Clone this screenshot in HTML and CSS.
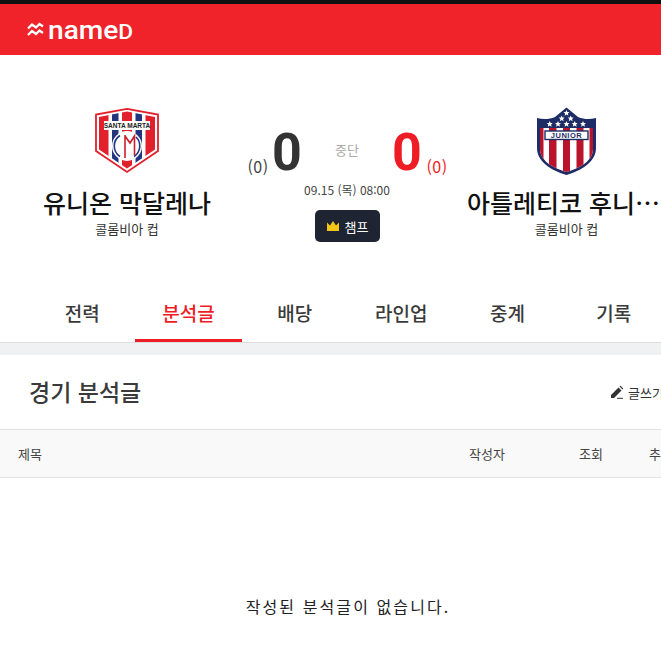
FILE: index.html
```html
<!DOCTYPE html>
<html lang="ko">
<head>
<meta charset="utf-8">
<title>NAMED</title>
<link rel="stylesheet" href="styles.css">
</head>
<body>
<div class="page">
  <header class="topbar">
    <svg class="logo-mark" viewBox="0 0 17 15" width="17" height="15" aria-hidden="true">
      <path d="M1 6.500 L5 2.500 L9 5.500 L12.500 2 L16 4.500 M1 13 L5 9 L9 12 L12.500 8.500 L16 11" fill="none" stroke="#fff" stroke-width="2.300"/>
    </svg>
    <span class="logo-text">name<span class="logo-d">D</span></span>
  </header>

  <section class="match">
    <div class="team">
      <svg class="crest" viewBox="0 0 64 66" width="64" height="66" aria-hidden="true">
        <defs>
          <clipPath id="santa-inner"><path d="M32 3.500 L60 9 V41.500 L32 60.500 L4 41.500 V9 Z"/></clipPath>
        </defs>
        <path d="M32 0.800 L63 6.500 V43 L32 64 L1 43 V6.500 Z" fill="#fff" stroke="#e2202c" stroke-width="1.800"/>
        <g clip-path="url(#santa-inner)">
          <rect x="4" y="0" width="9.500" height="66" fill="#e2202c"/>
          <rect x="17" y="0" width="6.500" height="66" fill="#23357f"/>
          <rect x="27" y="0" width="10" height="66" fill="#e2202c"/>
          <rect x="40.500" y="0" width="6.500" height="66" fill="#23357f"/>
          <rect x="50.500" y="0" width="9.500" height="66" fill="#e2202c"/>
        </g>
        <rect x="9" y="13" width="46" height="9" fill="#fff"/>
        <text class="crest-santa" x="32" y="20.200" text-anchor="middle">SANTA MARTA</text>
        <circle cx="32" cy="38" r="15" fill="#fff"/>
        <path d="M25 27.500 A12.500 12.500 0 0 0 25 48.500 M41 29 A12.500 12.500 0 0 1 39 48.500" fill="none" stroke="#23357f" stroke-width="1.600"/>
        <path d="M30 27 V50 M30 28 L35 35 L39.500 28 V47" fill="none" stroke="#c9202c" stroke-width="1.600"/>
      </svg>
      <h2 class="team-name">유니온 막달레나</h2>
      <p class="team-league">콜롬비아 컵</p>
    </div>

    <div class="center">
      <div class="score-row">
        <span class="sub-score">(0)</span>
        <strong class="score">0</strong>
        <span class="status">중단</span>
        <strong class="score score-away">0</strong>
        <span class="sub-score sub-away">(0)</span>
      </div>
      <p class="date">09.15 (목) 08:00</p>
      <a class="champ">
        <svg viewBox="0 0 14 12" width="14" height="12" aria-hidden="true">
          <path d="M1 2.500 L4 5.500 L7 1 L10 5.500 L13 2.500 V11 H1 Z" fill="#f5c518"/>
        </svg>
        <span>챔프</span>
      </a>
    </div>

    <div class="team team-right">
      <svg class="crest" viewBox="0 0 60 68" width="60" height="68" aria-hidden="true">
        <defs>
          <path id="star" d="M0 -3 L0.900 -1 L3 -0.900 L1.400 0.500 L1.900 2.700 L0 1.500 L-1.900 2.700 L-1.400 0.500 L-3 -0.900 L-0.900 -1 Z"/>
          <clipPath id="junior-inner"><path d="M3 21 H56 V42 C56 53 44 61 29.500 65 C15 61 3 53 3 42 Z"/></clipPath>
        </defs>
        <path d="M29.500 0.500 L41 10 C47 12.500 53 12.500 59 11 V41 C59 54 46 63 29.500 68 C13 63 0 54 0 41 V11 C6 12.500 12 12.500 18 10 Z" fill="#1e2c66"/>
        <g clip-path="url(#junior-inner)">
          <rect x="3" y="21" width="53" height="46" fill="#fff"/>
          <rect x="3" y="21" width="3.500" height="46" fill="#b9142b"/>
          <rect x="12" y="21" width="7.500" height="46" fill="#b9142b"/>
          <rect x="26" y="21" width="7" height="46" fill="#b9142b"/>
          <rect x="39.500" y="21" width="7" height="46" fill="#b9142b"/>
          <rect x="52.500" y="21" width="3.500" height="46" fill="#b9142b"/>
        </g>
        <g fill="#fff">
          <use href="#star" x="29.500" y="6"/><use href="#star" x="24.700" y="11.500"/><use href="#star" x="33.700" y="11.500"/>
          <use href="#star" x="12.700" y="17"/><use href="#star" x="21" y="17"/><use href="#star" x="29.500" y="17"/><use href="#star" x="37.700" y="17"/><use href="#star" x="46" y="17"/>
        </g>
        <rect x="8" y="24" width="43" height="8.500" fill="#fff" stroke="#1e2c66" stroke-width="1.400"/>
        <text class="crest-junior" x="29.500" y="31.300" text-anchor="middle">JUNIOR</text>
      </svg>
      <h2 class="team-name">아틀레티코 후니오르</h2>
      <p class="team-league">콜롬비아 컵</p>
    </div>
  </section>

  <nav class="tabs">
    <a class="tab">전력</a>
    <a class="tab tab-active">분석글</a>
    <a class="tab">배당</a>
    <a class="tab">라인업</a>
    <a class="tab">중계</a>
    <a class="tab">기록</a>
  </nav>

  <div class="band"></div>

  <section class="board">
    <div class="board-head">
      <h3 class="board-title">경기 분석글</h3>
      <a class="write">
        <svg viewBox="0 0 14 14" width="14" height="14" aria-hidden="true">
          <path d="M1 13 V10 L8.500 2.500 L11.500 5.500 L4 13 Z M9.500 1.500 L10.500 0.700 L13.200 3.400 L12.500 4.500 Z" fill="#333"/>
          <path d="M7 13.300 H13" stroke="#333" stroke-width="1"/>
        </svg>
        <span>글쓰기</span>
      </a>
    </div>
    <div class="table-head">
      <span class="col-title">제목</span>
      <span class="col-author">작성자</span>
      <span class="col-views">조회</span>
      <span class="col-rec">추천</span>
    </div>
    <p class="empty">작성된 분석글이 없습니다.</p>
  </section>
</div>
</body>
</html>
```
FILE: styles.css
```css
* { box-sizing: border-box; }
html, body { margin: 0; padding: 0; overflow: hidden; background: #fff; }
body { font-family: "Noto Sans CJK KR", "Noto Sans", sans-serif; color: #222; width: 661px; height: 665px; }
.page { width: 696px; }
h2, h3, p { margin: 0; font-weight: 400; }

.topbar { height: 55px; background: #f0222a; border-top: 4px solid #111; padding: 0 0 0 27px; display: flex; align-items: center; gap: 4px; }
.logo-text { font-family: "Roboto", sans-serif; font-weight: 500; font-size: 26px; line-height: 1; color: #fff; transform: scaleX(1.08); transform-origin: left center; }
.logo-d { font-size: 21px; }

.match { display: flex; padding: 52px 0 0 29px; height: 235px; }
.team { width: 196px; display: flex; flex-direction: column; align-items: center; }
.team-right { width: 199px; }
.crest { display: block; height: 68px; }
.crest-santa { font-family: "Liberation Sans", sans-serif; font-size: 6.500px; font-weight: 700; fill: #222; }
.crest-junior { font-family: "Liberation Sans", sans-serif; font-size: 7.500px; font-weight: 700; letter-spacing: 0.500px; fill: #1e2c66; }
.team-name { margin-top: 9px; font-size: 25px; line-height: 36px; color: #111; width: 100%; text-align: center; white-space: nowrap; overflow: hidden; text-overflow: ellipsis; font-weight: 500; }
.team-league { font-size: 13px; line-height: 18px; color: #333; }
.center { width: 242px; display: flex; flex-direction: column; align-items: center; padding: 15px 0 0 2px; }
.score-row { display: flex; align-items: baseline; height: 62px; }
.score { font-family: "Roboto", sans-serif; font-size: 52px; line-height: 62px; font-weight: 700; color: #333; width: 30px; text-align: center; }
.score-away { color: #ee1c25; }
.sub-score { font-size: 16px; letter-spacing: 0.500px; color: #444; width: 26px; text-align: center; transform: translate(-1px, 3px); }
.sub-away { color: #ee1c25; transform: translate(2px, 3px); }
.status { font-size: 13px; color: #aaa; width: 90px; text-align: center; align-self: center; margin-top: -8px; }
.date { font-size: 12px; line-height: 18px; color: #444; margin-top: -3px; }
.champ { margin-top: 11px; width: 65px; height: 32px; background: #1f2433; border-radius: 5px; display: flex; align-items: center; justify-content: center; gap: 5px; color: #fff; font-size: 13px; }

.tabs { display: flex; padding-left: 29px; height: 53px; border-bottom: 1px solid #ddd; }
.tab { width: 106.330px; height: 52px; display: flex; align-items: center; justify-content: center; font-size: 19px; color: #3a3a3a; padding-bottom: 7px; font-weight: 500; }
.tab-active { color: #ee1c25; border-bottom: 3px solid #ee1c25; padding-bottom: 4px; }

.band { height: 12px; background: #f0f1f3; }

.board-head { height: 74px; display: flex; align-items: center; justify-content: space-between; padding: 0 0 0 29px; }
.board-title { font-size: 23px; line-height: 34px; margin-top: -2px; font-weight: 500; color: #3a3a3a; }
.write { display: flex; align-items: center; gap: 4px; font-size: 13px; color: #333; width: 86px; }
.table-head { height: 49px; display: flex; align-items: center; background: #f9f9f9; border-top: 1px solid #e2e2e2; border-bottom: 1px solid #e2e2e2; font-size: 13px; color: #444; padding: 0 0 1px 18px; }
.col-title { width: 451px; }
.col-author { width: 110px; }
.col-views { width: 70px; }
.col-rec { width: 40px; }
.empty { margin-top: 116px; text-align: center; width: 696px; font-size: 16px; letter-spacing: 2.100px; color: #222; }
```
